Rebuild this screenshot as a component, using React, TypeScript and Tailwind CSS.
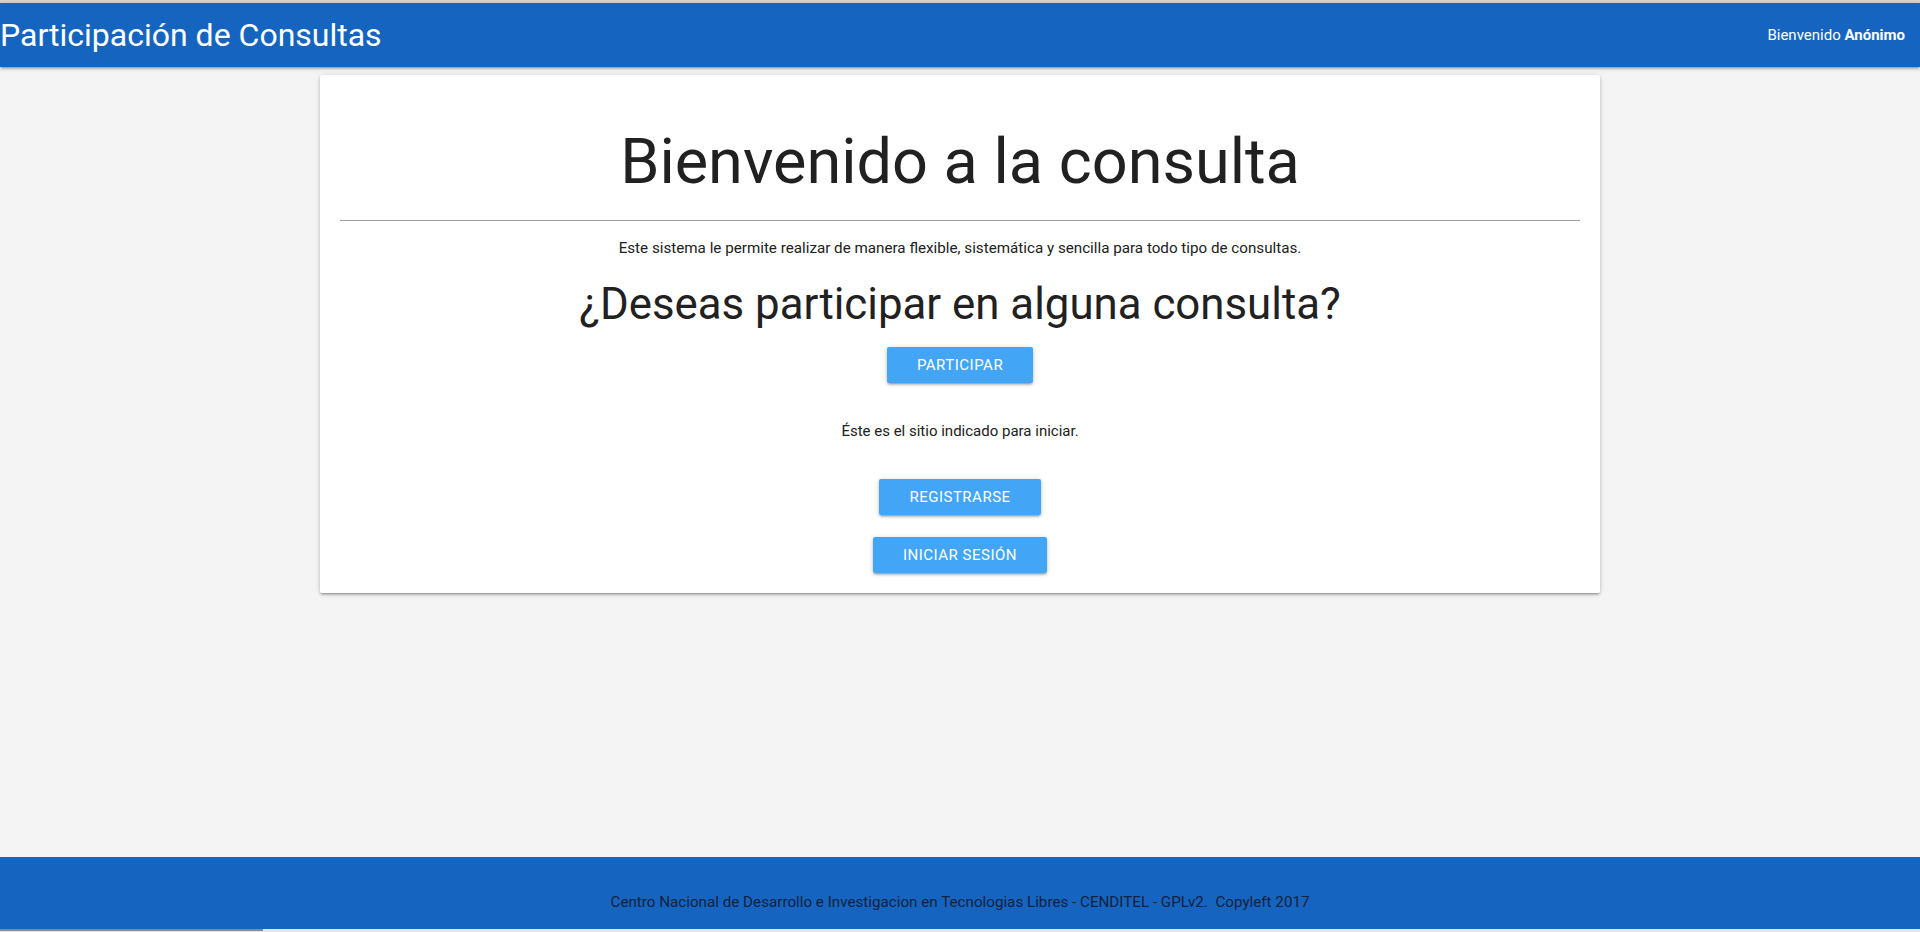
const btnCls =
  "h-9 rounded-[2px] bg-[#42a5f5] px-[30px] text-[15px] uppercase tracking-[0.5px] text-white shadow-[0_2px_2px_0_rgba(0,0,0,0.14),0_3px_1px_-2px_rgba(0,0,0,0.12),0_1px_5px_0_rgba(0,0,0,0.2)]";

function Header() {
  return (
    <header className="relative z-10 flex h-16 items-center justify-between bg-[#1565c0] text-white shadow-[0_2px_2px_0_rgba(0,0,0,0.14),0_3px_1px_-2px_rgba(0,0,0,0.12),0_1px_5px_0_rgba(0,0,0,0.2)]">
      <span className="text-[32px] leading-none">Participación de Consultas</span>
      <span className="pr-[15px] text-[15px]">
        Bienvenido <b className="font-bold">Anónimo</b>
      </span>
    </header>
  );
}

function WelcomeCard() {
  return (
    <section className="mx-auto mt-2 flex w-[1280px] flex-col items-center rounded-[2px] bg-white px-5 pt-[52px] pb-5 text-[#212121] shadow-[0_2px_2px_0_rgba(0,0,0,0.14),0_3px_1px_-2px_rgba(0,0,0,0.12),0_1px_5px_0_rgba(0,0,0,0.2)]">
      <h1 className="text-[63px] leading-[1.1]">Bienvenido a la consulta</h1>
      <hr className="mt-6 w-full border-0 border-t border-[#9e9e9e]" />
      <p className="mt-[16px] text-[15.2px] leading-[1.5]">
        Este sistema le permite realizar de manera flexible, sistemática y sencilla para todo tipo de consultas.
      </p>
      <h3 className="mt-[20px] text-[43.8px] leading-[1.1]">¿Deseas participar en alguna consulta?</h3>
      <button type="button" className={`mt-[19px] ${btnCls}`}>
        Participar
      </button>
      <p className="mt-[37px] text-[15px] leading-[1.5]">Éste es el sitio indicado para iniciar.</p>
      <button type="button" className={`mt-[36px] ${btnCls}`}>
        Registrarse
      </button>
      <button type="button" className={`mt-[22px] ${btnCls}`}>
        Iniciar sesión
      </button>
    </section>
  );
}

export default function App() {
  return (
    <div className="flex h-[932px] flex-col overflow-hidden bg-[#f4f4f4] font-['Roboto',sans-serif]">
      <div className="h-[3px] bg-[#d6d6d6]" />
      <Header />
      <main className="flex-1">
        <WelcomeCard />
      </main>
      <footer className="flex h-[72px] justify-center bg-[#1565c0] pt-[34px] text-[15.2px] leading-[1.5] text-[#14213d]">
        Centro Nacional de Desarrollo e Investigacion en Tecnologias Libres - CENDITEL - GPLv2.&nbsp; Copyleft 2017
      </footer>
      {/* bottom scrollbar strip */}
      <div className="h-[3px] bg-[#e6e6e6]">
        <div className="h-[2px] w-[263px] bg-[#8a8a8a]" />
      </div>
    </div>
  );
}
